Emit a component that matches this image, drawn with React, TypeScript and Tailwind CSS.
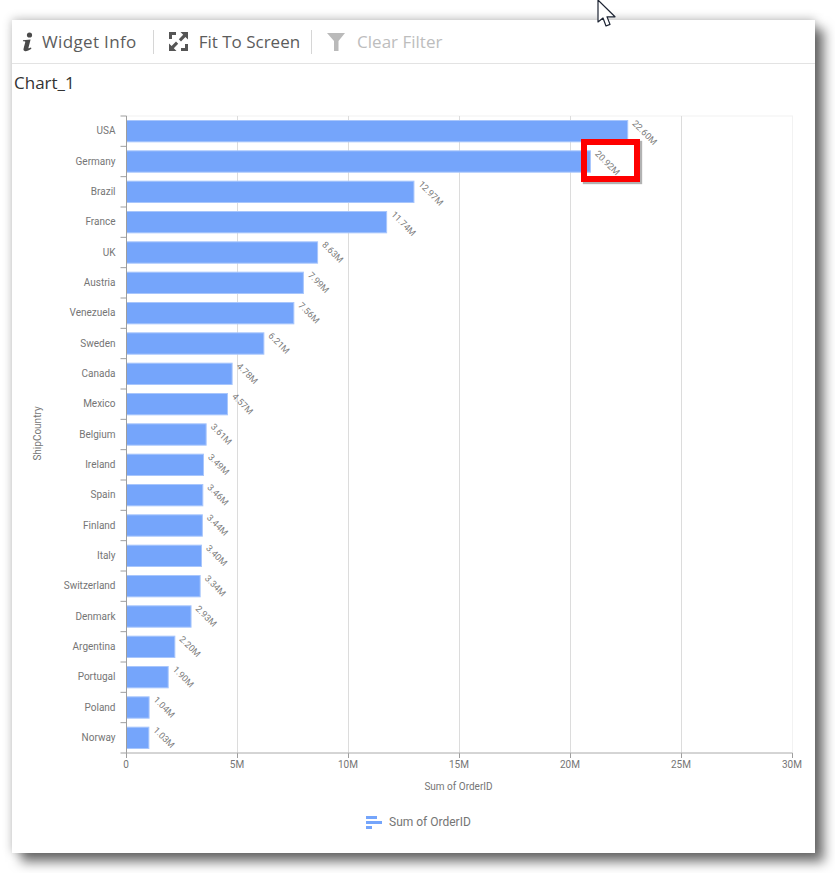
const rows = [
  ["USA", 22.6, "22.60M"],
  ["Germany", 20.92, "20.92M"],
  ["Brazil", 12.97, "12.97M"],
  ["France", 11.74, "11.74M"],
  ["UK", 8.63, "8.63M"],
  ["Austria", 7.99, "7.99M"],
  ["Venezuela", 7.56, "7.56M"],
  ["Sweden", 6.21, "6.21M"],
  ["Canada", 4.78, "4.78M"],
  ["Mexico", 4.57, "4.57M"],
  ["Belgium", 3.61, "3.61M"],
  ["Ireland", 3.49, "3.49M"],
  ["Spain", 3.46, "3.46M"],
  ["Finland", 3.44, "3.44M"],
  ["Italy", 3.4, "3.40M"],
  ["Switzerland", 3.34, "3.34M"],
  ["Denmark", 2.93, "2.93M"],
  ["Argentina", 2.2, "2.20M"],
  ["Portugal", 1.9, "1.90M"],
  ["Poland", 1.04, "1.04M"],
  ["Norway", 1.03, "1.03M"],
] as const

const ticks = ["0", "5M", "10M", "15M", "20M", "25M", "30M"]

// chart coordinates, relative to the panel's svg
const left = 114.5
const top = 19
const plotW = 666
const plotH = 637
const rowH = plotH / rows.length
const perM = plotW / 30

function Chart() {
  return (
    <svg width="803" height="736" className="block" fontFamily="Roboto, sans-serif">
      <rect x={left} y={top} width={plotW} height={plotH} fill="none" stroke="#f2f2f2" />
      {ticks.map((t, i) => {
        const x = left + i * (plotW / 6)
        return (
          <g key={t}>
            {i > 0 && i < 6 && <line x1={x} x2={x} y1={top} y2={top + plotH} stroke="#dcdcdc" />}
            <line x1={x} x2={x} y1={top + plotH} y2={top + plotH + 5} stroke="#9e9e9e" />
            <text x={x - 0.5} y={top + plotH + 14.5} textAnchor="middle" fontSize="10" fill="#757575">
              {t}
            </text>
          </g>
        )
      })}
      {rows.map(([name, value, label], i) => {
        const y = top + i * rowH
        const w = value * perM - 0.5
        return (
          <g key={name}>
            <line x1={left - 6} x2={left} y1={y} y2={y} stroke="#9e9e9e" />
            <rect x={left} y={y + 4.5} width={w} height={rowH - 9} fill="#75a5fb" stroke="#a8c6fc" />
            <text x={left - 11} y={y + rowH / 2 + 3} textAnchor="end" fontSize="10" fill="#757575">
              {name}
            </text>
            <text
              x={left + w + 4}
              y={y + 8}
              fontSize="9"
              fill="#7a7a7a"
              transform={`rotate(45 ${left + w + 4} ${y + 8})`}
            >
              {label}
            </text>
          </g>
        )
      })}
      <line x1={left - 6} x2={left} y1={top + plotH} y2={top + plotH} stroke="#9e9e9e" />
      <line x1={left} x2={left} y1={top} y2={top + plotH} stroke="#9e9e9e" />
      <line x1={left} x2={left + plotW} y1={top + plotH} y2={top + plotH} stroke="#b0b0b0" />
      <text x="446.5" y="692.5" textAnchor="middle" fontSize="10" fill="#757575">
        Sum of OrderID
      </text>
      <text
        x="0"
        y="0"
        textAnchor="middle"
        fontSize="10"
        fill="#757575"
        transform="translate(29 336.500) rotate(-90)"
      >
        ShipCountry
      </text>
      <rect x="354" y="719" width="11" height="3" fill="#75a5fb" />
      <rect x="354" y="724" width="16" height="3" fill="#75a5fb" />
      <rect x="354" y="729" width="6" height="3" fill="#75a5fb" />
      <text x="377" y="729" fontSize="12" fill="#757575">
        Sum of OrderID
      </text>
    </svg>
  )
}

export default function App() {
  return (
    <div className="relative h-[873px] w-[835px] overflow-hidden bg-white pl-3 pt-5">
      <div className="h-[833px] w-[803px] bg-white shadow-[9px_9px_11px_rgba(0,0,0,0.55),0_-1px_9px_rgba(0,0,0,0.25)]">
        <div className="flex h-11 items-center border-b border-[#e3e3e3] pl-[8px] font-['Open_Sans',sans-serif] text-[17px] text-[#5c5c5c]">
          <svg width="13" height="20" viewBox="0 0 13 20" fill="#4a4a4a" className="ml-[1px]">
            <circle cx="8.5" cy="3" r="2.6" />
            <path d="M2 8.2 9.6 7.6 7.4 16c-.1.5.5.6 2.6-.4l.4 1.2C8 18.6 6 19.3 4.2 19.2 2.6 19.1 2.2 18 2.600 16.600L4.300 10c.1-.5-.3-.7-2.400-.7z" />
          </svg>
          <span className="ml-[8px] tracking-[0.35px]">Widget Info</span>
          <div className="ml-[16px] h-6 w-px bg-[#d6d6d6]" />
          <svg width="19" height="19" viewBox="0 0 19 19" fill="#555555" className="ml-[15px]">
            <path d="M0 0h7v3H3v4H0zM19 19h-7v-3h4v-4h3z" />
            <path d="M11.500 0H19v7.500L16.400 5 12 9.400 9.800 7.200 14.200 2.800z" />
            <path d="M7.500 19H0v-7.500L2.600 14 7 9.600l2.200 2.200L4.800 16.200z" />
          </svg>
          <span className="ml-[11px]">Fit To Screen</span>
          <div className="ml-[11px] h-6 w-px bg-[#d6d6d6]" />
          <svg width="18" height="18" viewBox="0 0 18 18" fill="#bababa" className="ml-[15px]">
            <path d="M0 0h18l-6.500 8v10H7V8z" />
          </svg>
          <span className="ml-[12px] text-[#bdbdbd]">Clear Filter</span>
        </div>
        <h1 className="ml-[2px] mt-[6px] h-[27px] font-['Open_Sans',sans-serif] text-[17px] leading-[26px] font-normal text-[#333333]">
          Chart_1
        </h1>
        <Chart />
      </div>

      {/* callout drawn over the chart */}
      <div className="absolute left-[581px] top-[139px] h-[43px] w-[59px] border-[6px] border-[#fe0000] shadow-[2px_2px_1px_rgba(0,0,0,0.3)]" />

      {/* mouse pointer */}
      <svg width="20" height="28" viewBox="0 0 20 28" className="absolute left-[597px] top-0">
        <path
          d="M1 0v22l5-4 3 8 4-1.600-3-7.600h8z"
          fill="#ffffff"
          stroke="#1d2433"
          strokeWidth="1.200"
          strokeLinejoin="round"
        />
      </svg>
    </div>
  )
}
